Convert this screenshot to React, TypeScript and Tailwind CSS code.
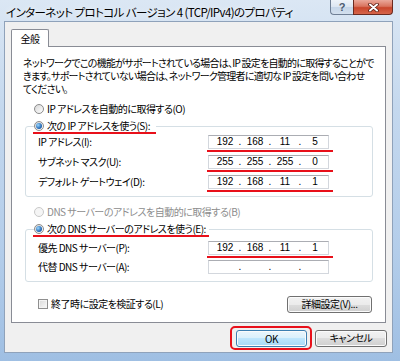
import React from 'react';

const jp = "font-['Noto_Sans_CJK_JP','Liberation_Sans',sans-serif] [font-feature-settings:'palt']";

function Radio({ checked, disabled }: { checked?: boolean; disabled?: boolean }) {
  return (
    <span
      className={`flex h-[10px] w-[10px] shrink-0 items-center justify-center rounded-full border ${
        disabled
          ? 'border-[#c9c9c9] bg-[#f5f5f5]'
          : 'border-[#8b8b8b] bg-[linear-gradient(135deg,#d6d6d6,#ffffff)]'
      }`}
    >
      {checked && (
        <span className="h-[6px] w-[6px] rounded-full bg-[radial-gradient(circle_at_35%_35%,#9ad8ff,#2a6db8_60%,#174a86)]" />
      )}
    </span>
  );
}

function Mark({ className }: { className: string }) {
  // red annotation stroke
  return <span className={`absolute h-[2px] bg-[#e8101a] ${className}`} />;
}

function IpBox({ parts, mark }: { parts?: string[]; mark?: boolean }) {
  const p = parts ?? ['', '', '', ''];
  return (
    <div className="relative flex h-[14px] w-[121px] items-center border border-[#d3d7dd] border-t-[#abadb3] bg-white pl-[4px] font-['Liberation_Sans',sans-serif] text-[10px] leading-[12px] tracking-normal text-black">
      {p.map((v, i) => (
        <React.Fragment key={i}>
          <span className="w-[24px] text-center">{v}</span>
          {i < 3 && <span className="w-[6px] text-center">.</span>}
        </React.Fragment>
      ))}
      {mark && <Mark className="-bottom-[4px] -left-[2px] -right-[5px]" />}
    </div>
  );
}

function Row({ label, children }: { label: string; children: React.ReactNode }) {
  return (
    <div className="flex h-[14px] items-center">
      <span className="ml-[4px] w-[170px] whitespace-nowrap">{label}</span>
      {children}
    </div>
  );
}

function Btn({ children, primary, className = '' }: { children: React.ReactNode; primary?: boolean; className?: string }) {
  return (
    <div
      className={`flex h-[17px] items-center justify-center rounded-[3px] border text-[10px] leading-none text-black shadow-[inset_0_0_0_1px_#fbfbfb] ${
        primary
          ? 'border-[#3c7fb1] bg-[linear-gradient(to_bottom,#eaf6fd_0%,#d9f0fc_50%,#bee6fd_50%,#a7d9f5_100%)]'
          : 'border-[#707070] bg-[linear-gradient(to_bottom,#f2f2f2_0%,#ebebeb_50%,#dddddd_50%,#cfcfcf_100%)]'
      } ${className}`}
    >
      {children}
    </div>
  );
}

export default function App() {
  return (
    <div className={`flex h-[361px] w-[400px] flex-col overflow-hidden bg-[linear-gradient(to_bottom,#dbe7f4_0%,#c4d8ee_30%,#b3cdea_70%,#9fbfe3_100%)] pb-[8px] pl-[4px] pr-[7px] text-[10px] tracking-[-0.5px] text-black ${jp}`}>
      {/* title bar */}
      <div className="flex h-[21px] shrink-0 items-start justify-between">
        <span className="whitespace-nowrap pl-[2px] pt-[5px] text-[11.5px] leading-[14px] tracking-[-0.6px] text-black [text-shadow:0_0_6px_#ffffff]">
          インターネット プロトコル バージョン 4 (TCP/IPv4)のプロパティ
        </span>
        <div className="flex">
          <div className="flex h-[15px] w-[23px] items-center justify-center rounded-bl-[4px] border border-t-0 border-r-0 border-[#6f7f95] bg-[linear-gradient(to_bottom,#eef3f9_0%,#dce6f2_50%,#c5d5e8_50%,#d3e0ee_100%)] font-['Liberation_Sans',sans-serif] text-[11px] font-bold leading-none tracking-normal text-[#4b5b70]">
            ?
          </div>
          <div className="flex h-[15px] w-[40px] items-center justify-center rounded-br-[4px] border border-t-0 border-[#6b2a1f] bg-[linear-gradient(to_bottom,#eaa89a_0%,#d9745f_45%,#c9462c_55%,#d6654a_100%)]">
            <svg width="11" height="9" viewBox="0 0 11 9">
              <path d="M2 1.5 L9 7.5 M9 1.5 L2 7.5" stroke="#5a1c12" strokeWidth="3.6" strokeLinecap="round" />
              <path d="M2 1.5 L9 7.5 M9 1.5 L2 7.5" stroke="#ffffff" strokeWidth="2" strokeLinecap="round" />
            </svg>
          </div>
        </div>
      </div>

      {/* client */}
      <div className="flex flex-1 flex-col border border-[#8fa2ba] bg-[#f0f0f0] px-[6px] pt-[7px]">
        <div className="relative z-10 -mb-px flex h-[18px] w-[38px] items-center justify-center rounded-t-[2px] border border-b-0 border-[#898c95] bg-white text-[10px]">
          全般
        </div>
        <div className="flex flex-col border border-[#898c95] bg-white pb-[10px] pl-[11px] pr-[12px] pt-[9px] leading-[10px]">
          <p className="whitespace-nowrap leading-[13px] tracking-[-0.75px]">
            ネットワークでこの機能がサポートされている場合は、IP 設定を自動的に取得することがで
            <br />
            きます。サポートされていない場合は、ネットワーク管理者に適切な IP 設定を問い合わせ
            <br />
            てください。
          </p>

          <div className="ml-[11px] mt-[8px] flex h-[12px] items-center gap-[3px]">
            <Radio />
            <span>IP アドレスを自動的に取得する(O)</span>
          </div>

          <fieldset className="ml-[2px] mt-[5px] rounded-[3px] border border-[#d5dfe5] pb-[7px] pl-[8px]">
            <legend className="relative flex h-[12px] items-center gap-[3px] pr-[6px]">
              <Radio checked />
              <span>次の IP アドレスを使う(S):</span>
              <Mark className="-bottom-[2px] -left-[1px] right-0" />
            </legend>
            <div className="mt-[3px] flex flex-col gap-[6px]">
              <Row label="IP アドレス(I):">
                <IpBox parts={['192', '168', '11', '5']} mark />
              </Row>
              <Row label="サブネット マスク(U):">
                <IpBox parts={['255', '255', '255', '0']} mark />
              </Row>
              <Row label="デフォルト ゲートウェイ(D):">
                <IpBox parts={['192', '168', '11', '1']} mark />
              </Row>
            </div>
          </fieldset>

          <div className="ml-[11px] mt-[9px] flex h-[12px] items-center gap-[3px] text-[#8d8d8d]">
            <Radio disabled />
            <span>DNS サーバーのアドレスを自動的に取得する(B)</span>
          </div>

          <fieldset className="ml-[2px] mt-[5px] rounded-[3px] border border-[#d5dfe5] pb-[7px] pl-[8px]">
            <legend className="relative flex h-[12px] items-center gap-[3px] pr-[3px]">
              <Radio checked />
              <span>次の DNS サーバーのアドレスを使う(E):</span>
              <Mark className="-bottom-[2px] -left-[1px] right-0" />
            </legend>
            <div className="mt-[6px] flex flex-col gap-[5px]">
              <Row label="優先 DNS サーバー(P):">
                <IpBox parts={['192', '168', '11', '1']} mark />
              </Row>
              <Row label="代替 DNS サーバー(A):">
                <IpBox />
              </Row>
            </div>
          </fieldset>

          <div className="mt-[14px] flex h-[16px] items-center justify-between">
            <div className="ml-[15px] flex items-center gap-[3px]">
              <span className="h-[10px] w-[10px] border border-[#8f8f8f] bg-[linear-gradient(135deg,#d9d9d9,#fafafa)] shadow-[inset_0_0_0_1px_#f4f4f4]" />
              <span>終了時に設定を検証する(L)</span>
            </div>
            <Btn className="mr-[1px] h-[16px] w-[85px]">詳細設定(V)...</Btn>
          </div>
        </div>

        <div className="-mr-px mt-[3px] flex items-center justify-end gap-[3px]">
          <div className="rounded-[5px] border-2 border-[#e8101a] pb-[1px] pl-[4px] pr-[3px] pt-[2px]">
            <Btn primary className="w-[71px]">OK</Btn>
          </div>
          <Btn className="w-[72px]">キャンセル</Btn>
        </div>
      </div>
    </div>
  );
}
